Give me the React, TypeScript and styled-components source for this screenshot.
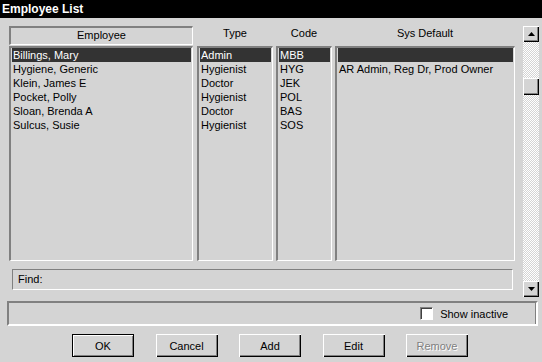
import React from "react";
import styled, { createGlobalStyle, css } from "styled-components";

const GlobalStyle = createGlobalStyle`
	html, body {
		margin: 0;
		padding: 0;
		background: #d4d4d4;
	}
	* {
		box-sizing: border-box;
	}
	#root {
		width: 542px;
		height: 362px;
		overflow: hidden;
		font-family: "Liberation Sans", Arial, sans-serif;
		font-size: 11px;
		color: #000;
	}
`;

interface Employee {
	name: string;
	type: string;
	code: string;
	sysDefault: string;
}

const employees: Employee[] = [
	{ name: "Billings, Mary", type: "Admin", code: "MBB", sysDefault: "" },
	{ name: "Hygiene, Generic", type: "Hygienist", code: "HYG", sysDefault: "AR Admin, Reg Dr, Prod Owner" },
	{ name: "Klein, James E", type: "Doctor", code: "JEK", sysDefault: "" },
	{ name: "Pocket, Polly", type: "Hygienist", code: "POL", sysDefault: "" },
	{ name: "Sloan, Brenda A", type: "Doctor", code: "BAS", sysDefault: "" },
	{ name: "Sulcus, Susie", type: "Hygienist", code: "SOS", sysDefault: "" },
];

const columns: { key: keyof Employee; title: string; boxed?: boolean }[] = [
	{ key: "name", title: "Employee", boxed: true },
	{ key: "type", title: "Type" },
	{ key: "code", title: "Code" },
	{ key: "sysDefault", title: "Sys Default" },
];

const Arrow: React.FC<{ down?: boolean }> = ({ down }) => (
	<svg width="7" height="4" viewBox="0 0 7 4">
		{down
			? <polygon points="0,0 7,0 3.5,4" fill="#000" />
			: <polygon points="3.5,0 7,4 0,4" fill="#000" />}
	</svg>
);

export default function App() {
	const selected = 0;

	return (
		<>
			<GlobalStyle />
			<Window>
				<TitleBar>Employee List</TitleBar>
				<Main>
					<Content>
						<Grid>
							{columns.map((col) => (
								<HeaderCell key={col.key}>
									{col.boxed ? <HeaderBox>{col.title}</HeaderBox> : col.title}
								</HeaderCell>
							))}
							{columns.map((col) => (
								<ListBox key={col.key}>
									{employees.map((emp, index) => (
										<Row key={index} $selected={index === selected}>
											{emp[col.key]}
										</Row>
									))}
								</ListBox>
							))}
						</Grid>
						<FindBox>Find:</FindBox>
					</Content>
					<ScrollBar>
						<ScrollButton><Arrow /></ScrollButton>
						<Track>
							<Thumb />
						</Track>
						<ScrollButton><Arrow down /></ScrollButton>
					</ScrollBar>
				</Main>
				<StatusPanel>
					<CheckLabel>
						<CheckBox />
						Show inactive
					</CheckLabel>
				</StatusPanel>
				<ButtonRow>
					<Button $default>OK</Button>
					<Button>Cancel</Button>
					<Button>Add</Button>
					<Button>Edit</Button>
					<Button $disabled>Remove</Button>
				</ButtonRow>
			</Window>
		</>
	);
}

const Window = styled.div`
	width: 542px;
	height: 362px;
	background: #d4d4d4;
	display: flex;
	flex-direction: column;
`;

const TitleBar = styled.div`
	height: 18px;
	line-height: 18px;
	padding-left: 2px;
	background: #000;
	color: #fff;
	font-weight: bold;
	font-size: 12px;
`;

const Main = styled.div`
	display: flex;
	flex-direction: row;
	align-items: flex-start;
	padding: 8px 0 0 9px;
`;

const Content = styled.div`
	width: 507px;
	display: flex;
	flex-direction: column;
`;

const Grid = styled.div`
	display: grid;
	grid-template-columns: 185px 76px 56px 180px;
	grid-template-rows: 20px 215px;
	column-gap: 3px;

	& > :nth-child(1), & > :nth-child(5) {
		margin-right: 1px;
	}
`;

const HeaderCell = styled.div`
	height: 20px;
	line-height: 15px;
	text-align: center;
`;

const HeaderBox = styled.div`
	height: 19px;
	line-height: 15px;
	border-top: 2px solid #808080;
	border-left: 2px solid #808080;
	border-right: 1px solid #fff;
	border-bottom: 1px solid #fff;
`;

const ListBox = styled.div`
	height: 215px;
	border-top: 2px solid #808080;
	border-left: 2px solid #808080;
	border-right: 1px solid #fff;
	border-bottom: 1px solid #fff;
	overflow: hidden;
`;

const Row = styled.div<{ $selected: boolean }>`
	height: 14px;
	line-height: 14px;
	margin: 0 1px;
	padding-left: 1px;
	white-space: nowrap;
	overflow: hidden;
	${({ $selected }) => $selected && css`
		background: #333;
		color: #fff;
	`}
`;

const FindBox = styled.div`
	margin: 8px 0 0 3px;
	width: 501px;
	height: 21px;
	line-height: 19px;
	padding-left: 5px;
	border-top: 1px solid #808080;
	border-left: 1px solid #808080;
	border-right: 1px solid #fff;
	border-bottom: 1px solid #fff;
`;

const ScrollBar = styled.div`
	margin-left: 7px;
	width: 16px;
	height: 271px;
	display: flex;
	flex-direction: column;
`;

const raised = css`
	background: #d4d4d4;
	box-shadow: inset 1px 1px #fff, inset -1px -1px #000, inset -2px -2px #808080;
`;

const ScrollButton = styled.div`
	${raised}
	width: 16px;
	height: 16px;
	display: flex;
	align-items: center;
	justify-content: center;
	padding-bottom: 1px;
`;

const Track = styled.div`
	flex: 1;
	padding-top: 36px;
	background-color: #d4d4d4;
	background-image: conic-gradient(#fff 25%, #d4d4d4 0 50%, #fff 0 75%, #d4d4d4 0);
	background-size: 2px 2px;
`;

const Thumb = styled.div`
	${raised}
	width: 16px;
	height: 17px;
`;

const StatusPanel = styled.div`
	margin: 4px 0 0 7px;
	width: 531px;
	height: 25px;
	border-top: 2px solid #808080;
	border-left: 2px solid #808080;
	border-right: 2px solid #fff;
	border-bottom: 2px solid #fff;
	box-shadow: inset -1px 0 #808080;
	display: flex;
	align-items: center;
	justify-content: flex-end;
	padding-right: 28px;
`;

const CheckLabel = styled.label`
	display: flex;
	align-items: center;
	gap: 7px;
`;

const CheckBox = styled.span`
	display: block;
	width: 13px;
	height: 13px;
	background: #fff;
	border-top: 1px solid #808080;
	border-left: 1px solid #808080;
	border-right: 1px solid #fff;
	border-bottom: 1px solid #fff;
	box-shadow: inset 1px 1px #404040;
`;

const ButtonRow = styled.div`
	margin-top: 8px;
	display: flex;
	justify-content: center;
	gap: 21.5px;
	padding-right: 2px;
`;

const Button = styled.div<{ $default?: boolean; $disabled?: boolean }>`
	${raised}
	width: 62px;
	height: 23px;
	display: flex;
	align-items: center;
	justify-content: center;
	${({ $default }) => $default && css`
		border: 1px solid #000;
		box-shadow: inset 1px 1px #fff, inset -1px -1px #808080;
	`}
	${({ $disabled }) => $disabled && css`
		color: #808080;
		text-shadow: 1px 1px #fff;
	`}
`;
